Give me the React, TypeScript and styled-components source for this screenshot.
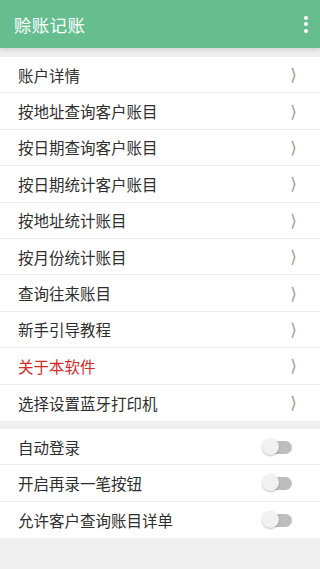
import styled, { createGlobalStyle } from "styled-components";

const GlobalStyle = createGlobalStyle`
  html, body {
    margin: 0;
    padding: 0;
    background: #efefef;
  }
  body {
    font-family: "Noto Sans CJK SC", "Noto Sans", Roboto, sans-serif;
  }
`;

const Page = styled.div`
  min-height: 569px;
  background: #efefef;
  display: flex;
  flex-direction: column;
`;

const Toolbar = styled.header`
  height: 48px;
  background: #66be8f;
  display: flex;
  align-items: center;
  justify-content: space-between;
  padding: 0 12px 0 14px;
  box-shadow: 0 2px 4px rgba(0, 0, 0, 0.12);
  position: relative;
  z-index: 1;
`;

const Title = styled.h1`
  margin: 0;
  color: #fff;
  font-size: 17.5px;
  font-weight: 400;
  letter-spacing: 0.3px;
`;

const MenuButton = styled.div`
  display: flex;
  flex-direction: column;
  gap: 2.5px;
  padding: 4px 0;
`;

const Dot = styled.span`
  width: 4px;
  height: 4px;
  border-radius: 50%;
  background: #fff;
`;

const Section = styled.section<{ $top: number }>`
  margin-top: ${({ $top }) => $top}px;
  background: #fff;
`;

const Row = styled.div<{ $h: number }>`
  height: ${({ $h }) => $h}px;
  display: flex;
  align-items: center;
  justify-content: space-between;
  padding: 0 23px 0 18px;
  border-bottom: 1px solid #ececec;
  box-sizing: border-box;
  &:last-child {
    border-bottom: none;
  }
`;

const Label = styled.span<{ $red?: boolean }>`
  font-size: 15.5px;
  color: ${({ $red }) => ($red ? "#d42a2a" : "#2e2e2e")};
`;

const Chevron = styled.span`
  display: inline-block;
  color: #9a9a9a;
  font-size: 15px;
  font-family: "DejaVu Sans", sans-serif;
  transform: scaleX(0.65);
  line-height: 1;
  margin-right: -3px;
`;

const Switch = styled.div`
  position: relative;
  width: 30px;
  height: 18px;
  margin-right: 5px;
`;

const Track = styled.div`
  position: absolute;
  right: 0;
  top: 3px;
  width: 24px;
  height: 13px;
  border-radius: 7px;
  background: #bdbdbd;
`;

const Knob = styled.div`
  position: absolute;
  left: 0;
  top: 0;
  width: 17px;
  height: 17px;
  border-radius: 50%;
  background: #f1f1f1;
  box-shadow: 0 1px 2px rgba(0, 0, 0, 0.25);
`;

const menuItems = [
  { text: "账户详情" },
  { text: "按地址查询客户账目" },
  { text: "按日期查询客户账目" },
  { text: "按日期统计客户账目" },
  { text: "按地址统计账目" },
  { text: "按月份统计账目" },
  { text: "查询往来账目" },
  { text: "新手引导教程" },
  { text: "关于本软件", red: true },
  { text: "选择设置蓝牙打印机" },
];

const switches = ["自动登录", "开启再录一笔按钮", "允许客户查询账目详单"];

export default function App() {
  return (
    <Page>
      <GlobalStyle />
      <Toolbar>
        <Title>赊账记账</Title>
        <MenuButton>
          <Dot />
          <Dot />
          <Dot />
        </MenuButton>
      </Toolbar>

      <Section $top={9}>
        {menuItems.map((item) => (
          <Row key={item.text} $h={36.4}>
            <Label $red={item.red}>{item.text}</Label>
            <Chevron>❭</Chevron>
          </Row>
        ))}
      </Section>

      <Section $top={8}>
        {switches.map((s) => (
          <Row key={s} $h={36.5}>
            <Label>{s}</Label>
            <Switch>
              <Track />
              <Knob />
            </Switch>
          </Row>
        ))}
      </Section>
    </Page>
  );
}
